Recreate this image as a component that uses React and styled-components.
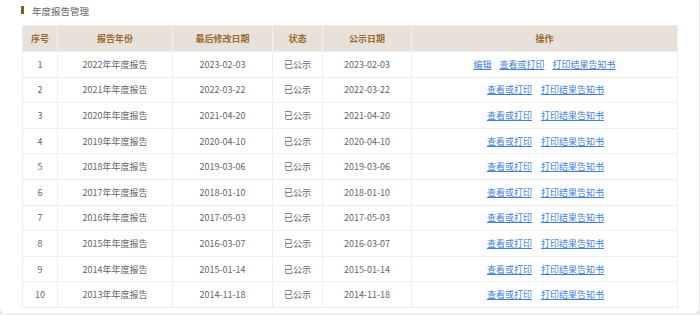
import React from 'react'
import styled, { createGlobalStyle } from 'styled-components'

const GlobalStyle = createGlobalStyle`
  html, body {
    margin: 0;
    padding: 0;
    background: #eeeeee;
  }
  body {
    font-family: "Noto Sans CJK SC", "Liberation Sans", sans-serif;
  }
`

const reports = [
  { id: 1, year: 2022, modified: '2023-02-03', published: '2023-02-03', editable: true },
  { id: 2, year: 2021, modified: '2022-03-22', published: '2022-03-22' },
  { id: 3, year: 2020, modified: '2021-04-20', published: '2021-04-20' },
  { id: 4, year: 2019, modified: '2020-04-10', published: '2020-04-10' },
  { id: 5, year: 2018, modified: '2019-03-06', published: '2019-03-06' },
  { id: 6, year: 2017, modified: '2018-01-10', published: '2018-01-10' },
  { id: 7, year: 2016, modified: '2017-05-03', published: '2017-05-03' },
  { id: 8, year: 2015, modified: '2016-03-07', published: '2016-03-07' },
  { id: 9, year: 2014, modified: '2015-01-14', published: '2015-01-14' },
  { id: 10, year: 2013, modified: '2014-11-18', published: '2014-11-18' },
]

const columns = ['35px', '115px', '100px', '50px', '89px', 'auto']

const Panel = styled.div`
  box-sizing: border-box;
  width: 699px;
  height: 313px;
  background: #fff;
  border-radius: 0 0 4px 4px;
  box-shadow: 0 1px 1px rgba(0, 0, 0, 0.18);
  padding: 3px 21px 0 22px;
`

const Title = styled.div`
  display: flex;
  align-items: center;
  gap: 8px;
  height: 15px;
  margin-bottom: 7px;
  font-size: 9.5px;
  color: #666;

  &::before {
    content: '';
    display: block;
    width: 3px;
    height: 8px;
    margin-left: -1px;
    margin-top: -1px;
    background: #8a5a1c;
  }
`

const Table = styled.table`
  width: 656px;
  border-collapse: collapse;
  table-layout: fixed;
  font-size: 9px;
  color: #666;
  border: 1px solid #eeeeee;
`

const HeadCell = styled.th`
  height: 25px;
  padding: 0;
  background: #e8e1da;
  color: #9a6a32;
  font-weight: bold;
  text-align: center;
  border-right: 1px solid #f4f0ec;

  &:last-child {
    border-right: none;
  }
`

const Cell = styled.td`
  height: 24.6px;
  padding: 0;
  text-align: center;
  border-top: 1px solid #eeeeee;
  border-right: 1px solid #eeeeee;
  white-space: nowrap;

  &:last-child {
    border-right: none;
  }
`

const Actions = styled.div`
  display: flex;
  justify-content: center;
  gap: ${props => (props.$wide ? '8px' : '9px')};
  padding-left: ${props => (props.$wide ? '0' : '2px')};
`

const Link = styled.a`
  color: #3f7fd6;
  text-decoration: underline;
  text-underline-offset: 1px;
  cursor: pointer;
`

export default function App() {
  return (
    <>
      <GlobalStyle />
      <Panel>
        <Title>年度报告管理</Title>
        <Table>
          <colgroup>
            {columns.map((w, i) => (
              <col key={i} style={{ width: w }} />
            ))}
          </colgroup>
          <thead>
            <tr>
              <HeadCell>序号</HeadCell>
              <HeadCell>报告年份</HeadCell>
              <HeadCell>最后修改日期</HeadCell>
              <HeadCell>状态</HeadCell>
              <HeadCell>公示日期</HeadCell>
              <HeadCell>操作</HeadCell>
            </tr>
          </thead>
          <tbody>
            {reports.map(r => (
              <tr key={r.id}>
                <Cell>{r.id}</Cell>
                <Cell>{r.year}年年度报告</Cell>
                <Cell>{r.modified}</Cell>
                <Cell>已公示</Cell>
                <Cell>{r.published}</Cell>
                <Cell>
                  <Actions $wide={r.editable}>
                    {r.editable && <Link>编辑</Link>}
                    <Link>查看或打印</Link>
                    <Link>打印结果告知书</Link>
                  </Actions>
                </Cell>
              </tr>
            ))}
          </tbody>
        </Table>
      </Panel>
    </>
  )
}
